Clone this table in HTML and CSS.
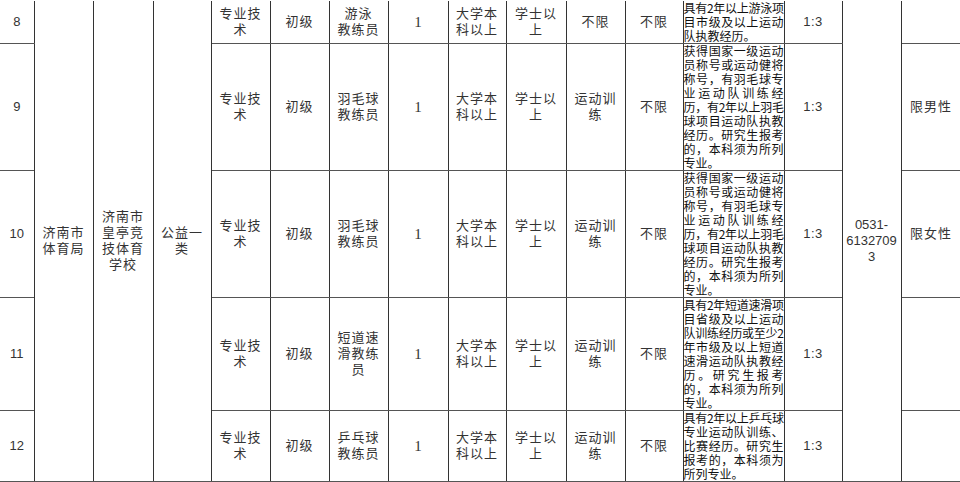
FILE: index.html
```html
<!DOCTYPE html>
<html lang="zh-CN">
<head>
<meta charset="utf-8">
<title>岗位表</title>
<link rel="stylesheet" href="styles.css">
</head>
<body>
<table class="sheet">
  <colgroup>
    <col class="w34"><col class="w59"><col class="w60"><col class="w58">
    <col class="w59"><col class="w59"><col class="w59"><col class="w60">
    <col class="w58"><col class="w60"><col class="w59"><col class="w58">
    <col class="w101"><col class="w58"><col class="w59"><col class="w60">
  </colgroup>
  <tbody>
    <tr>
      <td class="num">8</td>
      <td rowspan="5">济南市体育局</td>
      <td rowspan="5">济南市皇亭竞技体育学校</td>
      <td rowspan="5">公益一类</td>
      <td>专业技术</td>
      <td>初级</td>
      <td>游泳<br>教练员</td>
      <td class="serif">1</td>
      <td>大学本科以上</td>
      <td>学士以上</td>
      <td>不限</td>
      <td>不限</td>
      <td class="desc"><span class="ln tight">具有2年以上游泳项</span><span class="ln">目市级及以上运动</span><span class="ln end">队执教经历。</span></td>
      <td class="ratio">1:3</td>
      <td rowspan="5" class="phone">0531-<br>6132709<br>3</td>
      <td></td>
    </tr>
    <tr>
      <td class="num">9</td>
      <td>专业技术</td>
      <td>初级</td>
      <td>羽毛球教练员</td>
      <td class="serif">1</td>
      <td>大学本科以上</td>
      <td>学士以上</td>
      <td>运动训练</td>
      <td>不限</td>
      <td class="desc"><span class="ln">获得国家一级运动</span><span class="ln">员称号或运动健将</span><span class="ln">称号，有羽毛球专</span><span class="ln">业运动队训练经</span><span class="ln tight">历，有2年以上羽毛</span><span class="ln">球项目运动队执教</span><span class="ln">经历。研究生报考</span><span class="ln">的，本科须为所列</span><span class="ln end">专业。</span></td>
      <td class="ratio">1:3</td>
      <td>限男性</td>
    </tr>
    <tr>
      <td class="num">10</td>
      <td>专业技术</td>
      <td>初级</td>
      <td>羽毛球教练员</td>
      <td class="serif">1</td>
      <td>大学本科以上</td>
      <td>学士以上</td>
      <td>运动训练</td>
      <td>不限</td>
      <td class="desc"><span class="ln">获得国家一级运动</span><span class="ln">员称号或运动健将</span><span class="ln">称号，有羽毛球专</span><span class="ln">业运动队训练经</span><span class="ln tight">历，有2年以上羽毛</span><span class="ln">球项目运动队执教</span><span class="ln">经历。研究生报考</span><span class="ln">的，本科须为所列</span><span class="ln end">专业。</span></td>
      <td class="ratio">1:3</td>
      <td>限女性</td>
    </tr>
    <tr>
      <td class="num">11</td>
      <td>专业技术</td>
      <td>初级</td>
      <td>短道速滑教练员</td>
      <td class="serif">1</td>
      <td>大学本科以上</td>
      <td>学士以上</td>
      <td>运动训练</td>
      <td>不限</td>
      <td class="desc"><span class="ln tight">具有2年短道速滑项</span><span class="ln">目省级及以上运动</span><span class="ln tight">队训练经历或至少2</span><span class="ln">年市级及以上短道</span><span class="ln">速滑运动队执教经</span><span class="ln">历。研究生报考</span><span class="ln">的，本科须为所列</span><span class="ln end">专业。</span></td>
      <td class="ratio">1:3</td>
      <td></td>
    </tr>
    <tr>
      <td class="num">12</td>
      <td>专业技术</td>
      <td>初级</td>
      <td>乒乓球教练员</td>
      <td class="serif">1</td>
      <td>大学本科以上</td>
      <td>学士以上</td>
      <td>运动训练</td>
      <td>不限</td>
      <td class="desc"><span class="ln tight">具有2年以上乒乓球</span><span class="ln">专业运动队训练、</span><span class="ln">比赛经历。研究生</span><span class="ln">报考的，本科须为</span><span class="ln end">所列专业。</span></td>
      <td class="ratio">1:3</td>
      <td></td>
    </tr>
  </tbody>
</table>
</body>
</html>
```

FILE: styles.css
```css
html, body {
  margin: 0;
  padding: 0;
  background: #fff;
  overflow: hidden;
}

.sheet {
  border-collapse: collapse;
  table-layout: fixed;
  width: 961px;
  margin-top: 1px;
  font-family: "Liberation Sans", "Noto Sans CJK SC", sans-serif;
  font-size: 13px;
  color: #333;
}

.w34 { width: 34px; }
.w58 { width: 58px; }
.w59 { width: 59px; }
.w60 { width: 60px; }
.w101 { width: 101px; }

.sheet td {
  border-left: 1px solid #333;
  border-right: 1px solid #333;
  border-top: 1px solid #555;
  border-bottom: 1px solid #555;
  padding: 0 4px;
  text-align: center;
  vertical-align: middle;
  line-height: 16px;
  letter-spacing: 1px;
}

.sheet tr:first-child td {
  border-top-style: hidden;
}

.sheet td.num {
  border-left-style: hidden;
  letter-spacing: 0;
}

.sheet td.serif {
  font-family: "Liberation Serif", "DejaVu Serif", serif;
  font-size: 15px;
  letter-spacing: 0;
}

.sheet td.ratio {
  letter-spacing: 0.5px;
}

.sheet td.phone {
  padding: 0 1px;
  letter-spacing: 0;
}

.sheet td.desc {
  padding: 0;
  vertical-align: top;
  font-family: "Noto Sans CJK SC", sans-serif;
  font-size: 12px;
  line-height: 14px;
  letter-spacing: 0;
  color: #111;
}

.desc .ln {
  display: block;
  text-align: justify;
  text-align-last: justify;
}

.desc .ln.tight {
  letter-spacing: -0.45px;
}

.desc .ln.end {
  text-align-last: left;
}
```
